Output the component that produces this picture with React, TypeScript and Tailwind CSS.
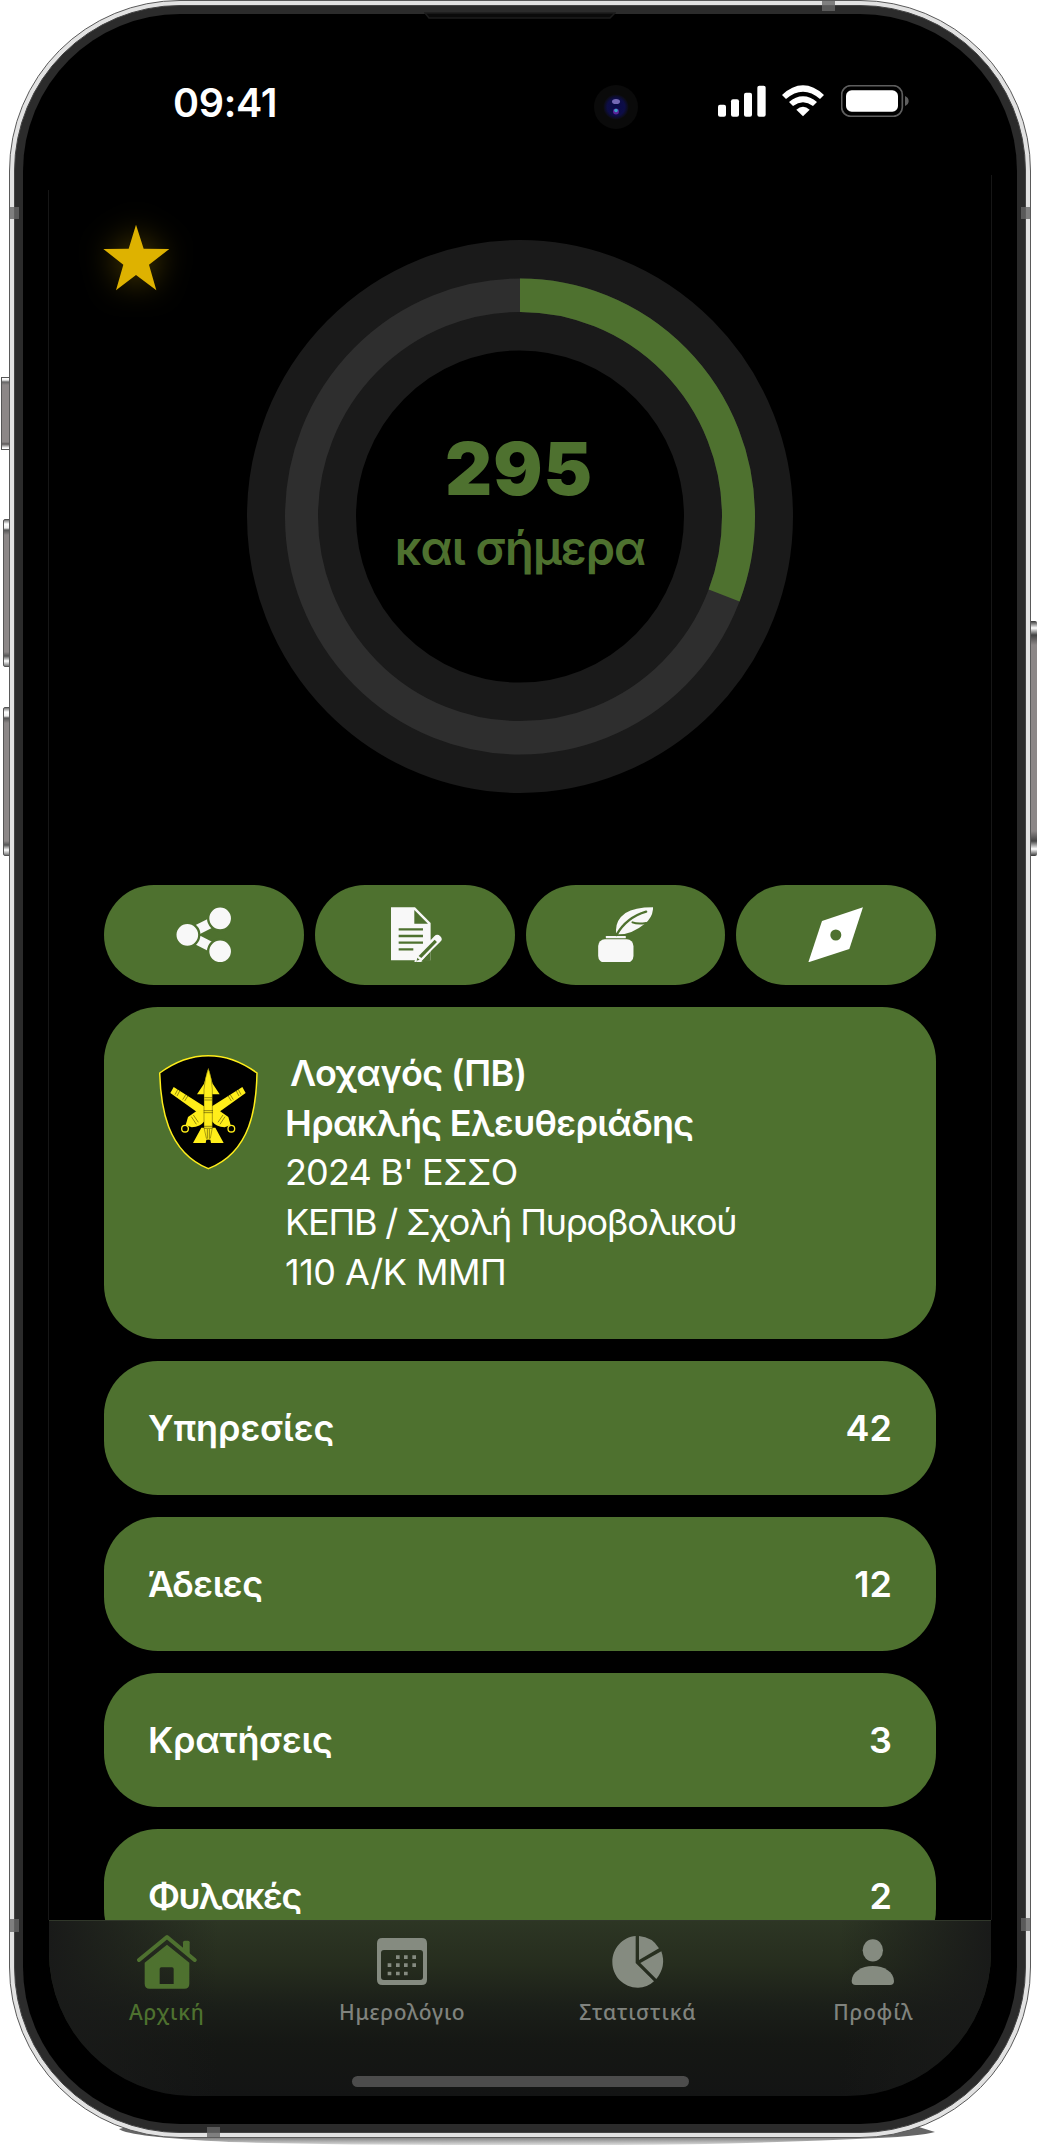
import React from "react";

const GREEN = "#4e712f";

function StatusBar() {
  return (
    <div className="flex h-[178px] shrink-0 items-start pt-[63px] pl-[124px]">
      <div className="mt-[2px] h-[48px] w-[421px] shrink-0 text-[39.500px] leading-[48px] font-[560] tracking-[-0.300px] text-white">
        09:41
      </div>
      <svg className="mt-[8px] mr-[80px]" width="44" height="44" viewBox="0 0 44 44">
        <defs>
          <radialGradient id="lens">
            <stop offset="0" stopColor="#0a0a4a" />
            <stop offset="0.7" stopColor="#0d0d45" />
            <stop offset="1" stopColor="#0c0c10" />
          </radialGradient>
        </defs>
        <circle cx="22" cy="22" r="22" fill="#0a0a0a" />
        <circle cx="22" cy="22" r="12.5" fill="url(#lens)" />
        <ellipse cx="22" cy="16.5" rx="4" ry="2.6" fill="#8f7fd0" opacity="0.8" />
        <circle cx="22" cy="26.500" r="3" fill="#5a2298" />
        <circle cx="22" cy="25.5" r="1.8" fill="#38a0c8" />
      </svg>
      <svg className="mt-[8px]" width="48" height="32" viewBox="597 256 144 96" fill="#fff">
        <rect x="597" y="315" width="24" height="36" rx="6" />
        <rect x="636" y="299" width="24" height="52" rx="6" />
        <rect x="675" y="279" width="24" height="72" rx="6" />
        <rect x="715" y="258" width="25" height="93" rx="6" />
      </svg>
      <svg className="mt-[8px] ml-[16px]" width="42" height="32" viewBox="789 256 126 96" fill="#fff">
        <path d="M789 286Q820 257 852 257T915 286L903 298Q878 276 852 276T801 298Z" />
        <path d="M810 307Q830 290 852 290T894 307L882 319Q867 308 852 308T822 319Z" />
        <path d="M832 330Q852 313 872 330L852 350Z" />
      </svg>
      <svg className="mt-[8px] ml-[17px]" width="68" height="32" viewBox="966 256 204 96">
        <rect x="968" y="258" width="182" height="92" rx="27" fill="none" stroke="#5e5e5e" strokeWidth="5" />
        <rect x="981" y="272" width="156" height="64" rx="17" fill="#fff" />
        <path d="M1158 289Q1169 294 1169 304T1158 319Z" fill="#5e5e5e" />
      </svg>
    </div>
  );
}

function Hero() {
  return (
    <div className="grid h-[692.5px] shrink-0 grid-cols-1 grid-rows-1">
      <svg
        className="col-start-1 row-start-1 mt-[32px] -ml-px overflow-visible drop-shadow-[0_0_16px_rgba(222,178,0,0.36)]"
        width="67"
        height="67"
        viewBox="310 672 201 201"
      >
        <path d="M409 674L432 746L509 747L448 794L470 871L409 825L349 871L371 794L311 747L387 746Z" fill="#deb200" />
      </svg>
      <div className="col-start-1 row-start-1 mt-[48px] grid h-[553px] w-[546px] justify-self-center">
        <svg className="col-start-1 row-start-1" width="546" height="553" viewBox="-273 -276.5 546 553">
          <g transform="scale(1 1.0128)">
            <circle r="218.5" fill="none" stroke="#1a1a1a" strokeWidth="109" />
            <circle r="218.5" fill="none" stroke="#2e2e2e" strokeWidth="33" />
            <circle
              r="218.5"
              fill="none"
              stroke={GREEN}
              strokeWidth="33"
              pathLength="360"
              strokeDasharray="110.9 360"
              transform="rotate(-90)"
            />
          </g>
        </svg>
        <div className="col-start-1 row-start-1 flex flex-col items-center pt-[187px] text-[#4e712f]">
          <div className="-ml-[2px] h-[84px] text-[73px] leading-[84px] font-black tracking-[1px]">295</div>
          <div className="mt-[9px] h-[56px] text-[47px] leading-[56px] font-[560] tracking-[-1px] whitespace-nowrap">
            και σήμερα
          </div>
        </div>
      </div>
    </div>
  );
}

function ShareIcon() {
  return (
    <svg width="55.3" height="55.7" viewBox="257 110 166 167">
      <path d="M291 193L389 144M291 193L389 243" stroke="#f8f8f8" strokeWidth="30" />
      <g fill="#f8f8f8" stroke={GREEN} strokeWidth="7">
        <circle cx="291" cy="193.5" r="36" />
        <circle cx="389.500" cy="144" r="36" />
        <circle cx="389.500" cy="243" r="36" />
      </g>
      <path d="M327 194h12" stroke={GREEN} strokeWidth="4" />
    </svg>
  );
}

function DocumentIcon() {
  return (
    <svg width="55.300" height="55.700" viewBox="892 110 166 167">
      <path d="M904 111H976L1023 158V270H904Z" fill="#f8f8f8" />
      <path d="M974 119V160H1015Z" fill={GREEN} />
      <path d="M927 177h73M927 197h73M927 217h73M927 237h44" stroke={GREEN} strokeWidth="7" />
      <path d="M974 262L979 250L1022 207V230L998 273L985 279Z" fill="#f8f8f8" />
      <path d="M996 272L1023 243V271Z" fill={GREEN} />
      <path d="M974 276L979 257L1034 198Q1043 189 1052 198T1052 214L996 270Z" fill="#f8f8f8" />
      <path d="M987 257L1035 208L1042 215L995 263Z" fill={GREEN} />
      <path d="M983 262L990 268L981 271Z" fill={GREEN} />
    </svg>
  );
}

function QuillIcon() {
  return (
    <svg width="55.300" height="55.700" viewBox="263.500 110 166 167" fill="#f8f8f8">
      <rect x="264" y="207" width="106" height="70" rx="20" />
      <rect x="287" y="197" width="60" height="7" rx="1.500" />
      <path d="M318 187Q314 151 346 128Q373 111 429 111Q428 142 404 160Q364 193 324 192Z" />
      <path d="M319 194C338 160 364 137 408 124" fill="none" stroke={GREEN} strokeWidth="7" strokeLinecap="round" />
      <path d="M367 156Q382 162 408 158" fill="none" stroke={GREEN} strokeWidth="6" strokeLinecap="round" />
    </svg>
  );
}

function CompassIcon() {
  return (
    <svg width="55.300" height="55.700" viewBox="897 110 166 167">
      <path d="M1062 111L1021 236L898 276L939 152Z" fill="#fff" />
      <circle cx="980.500" cy="194" r="16.500" fill={GREEN} />
    </svg>
  );
}

function Emblem() {
  const barrel = (
    <g>
      <path d="M99 140L190 198L222 224L202 246L176 220L89 158Z" fill="#ffee1a" />
      <path d="M112 146L103 163M118 150L109 167M136 162L126 178M142 166L132 182" stroke="#2a2600" strokeWidth="1.500" />
    </g>
  );
  const breech = (
    <g>
      <path d="M216 220L232 208L263 230L270 254L252 261Q226 259 213 242Z" fill="#ffee1a" />
      <path d="M247 224L232 246M253 229L238 252" stroke="#2a2600" strokeWidth="1.500" />
      <circle cx="272" cy="265" r="10" fill="none" stroke="#ffee1a" strokeWidth="4" />
    </g>
  );
  return (
    <svg width="100.700" height="116.300" viewBox="52 41 302 349">
      <path
        d="M57 98Q127 46 203 46T349 98C347 196 333 334 203 385C77 334 60 196 57 98Z"
        fill="#000"
        stroke="#ffee1a"
        strokeWidth="4.500"
      />
      {barrel}
      <g transform="translate(404 0) scale(-1 1)">{barrel}</g>
      {breech}
      <g transform="translate(405 0) scale(-1 1)">{breech}</g>
      <path d="M203 83L216 130L237 162H169L190 130Z" fill="#ffee1a" />
      <path d="M182 262L157 308H195L197 298H209L211 308H249L224 262Z" fill="#ffee1a" />
      <path d="M203 84Q214 112 215 148V262L209 294Q202 302 197 294L190 262V148Q192 112 203 84Z" fill="#ffee1a" stroke="#2a2600" strokeWidth="1.200" />
      <path d="M191 172H215M191 179H215M189 211H217M189 217H217M190 258H215M190 264H215M200 266V294M206 266V294" stroke="#2a2600" strokeWidth="1.500" />
    </svg>
  );
}

function ProfileCard() {
  return (
    <div className="mt-[22px] flex h-[332px] shrink-0 rounded-[54px] bg-[#4e712f] pt-[42.500px] pl-[54px] text-[36px] leading-[49.7px] text-white">
      <div className="mt-[5px] w-[128px] shrink-0">
        <Emblem />
      </div>
      <div className="-ml-px whitespace-nowrap">
        <div className="pl-[5px] font-[580] tracking-[-0.6px]">Λοχαγός (ΠΒ)</div>
        <div className="font-[580] tracking-[-0.7px]">Ηρακλής Ελευθεριάδης</div>
        <div className="font-[390] tracking-[-0.850px]">2024 Β' ΕΣΣΟ</div>
        <div className="font-[390] tracking-[-1.2px]">ΚΕΠΒ / Σχολή Πυροβολικού</div>
        <div className="font-[390] tracking-[-0.5px]">110 Α/Κ ΜΜΠ</div>
      </div>
    </div>
  );
}

const rows = [
  { label: "Υπηρεσίες", value: 42, tracking: "tracking-[-0.1px]" },
  { label: "Άδειες", value: 12, tracking: "tracking-[-0.5px]" },
  { label: "Κρατήσεις", value: 3, tracking: "tracking-[-0.3px]" },
  { label: "Φυλακές", value: 2, tracking: "tracking-[-1.400px]" },
];

const actions = [ShareIcon, DocumentIcon, QuillIcon, CompassIcon];

function HomeIcon() {
  return (
    <svg width="60" height="60" viewBox="409 159 180 180" fill={GREEN}>
      <path d="M415 240L499 171L582 240" fill="none" stroke={GREEN} strokeWidth="12" strokeLinecap="round" strokeLinejoin="round" />
      <path d="M547 205V187Q547 182 552 182H562Q567 182 567 187V226Z" />
      <path
        fillRule="evenodd"
        d="M499 194L566 248V311Q566 326 551 326H447Q432 326 432 311V248ZM482 262Q477 262 477 267V312H519V267Q519 262 514 262Z"
      />
    </svg>
  );
}

function CalendarIcon() {
  return (
    <svg width="60" height="60" viewBox="1116 159 180 180" fill="#858b80">
      <path
        fillRule="evenodd"
        d="M1147 174H1265Q1281 174 1281 190V299Q1281 315 1265 315H1147Q1131 315 1131 299V190Q1131 174 1147 174ZM1152 210Q1143 210 1143 219V291Q1143 300 1152 300H1260Q1269 300 1269 291V219Q1269 210 1260 210Z"
      />
      <path d="M1188 226h11v11h-11zM1212 226h11v11h-11zM1237 226h11v11h-11zM1163 250h11v11h-11zM1188 250h11v11h-11zM1212 250h11v11h-11zM1237 250h11v11h-11zM1163 275h11v11h-11zM1188 275h11v11h-11zM1212 275h11v11h-11z" />
    </svg>
  );
}

function PieIcon() {
  return (
    <svg width="60" height="60" viewBox="268 159 180 180" fill="#858b80">
      <path d="M351 168V249L406 304Q386 323 358 323C315 323 281 289 281 246C281 204 312 171 351 168Z" />
      <path d="M361 168Q401 171 421 205L361 240Z" />
      <path d="M428 214Q444 259 413 297L365 249Z" />
    </svg>
  );
}

function PersonIcon() {
  return (
    <svg width="60" height="60" viewBox="973 159 180 180" fill="#858b80">
      <ellipse cx="1062.500" cy="211" rx="30.500" ry="33.500" />
      <path d="M999 303C1000 276 1028 258 1062.500 258S1125 276 1126 303Q1126 315 1114 315H1011Q999 315 999 303Z" />
    </svg>
  );
}

const tabs = [
  { label: "Αρχική", Icon: HomeIcon, color: "text-[#4e712f]" },
  { label: "Ημερολόγιο", Icon: CalendarIcon, color: "text-[#80837e]" },
  { label: "Στατιστικά", Icon: PieIcon, color: "text-[#80837e]" },
  { label: "Προφίλ", Icon: PersonIcon, color: "text-[#80837e]" },
];

function TabBar() {
  return (
    <div className="flex h-[176px] shrink-0 flex-col overflow-hidden rounded-b-[144px] border-t border-[#30372a] bg-[linear-gradient(90deg,#191a19_0%,#191a1900_18%,#191a1900_84%,#191a19_100%),linear-gradient(180deg,#2d3624_0%,#262d1e_25%,#1b1f19_48%,#151714_70%,#131414_100%)]">
      <div className="grid grid-cols-4 pt-[12px]">
        {tabs.map(({ label, Icon, color }) => (
          <div key={label} className="flex flex-col items-center">
            <Icon />
            <div
              className={`mt-[4px] h-[30px] font-['Noto_Sans','Open_Sans',sans-serif] text-[21px] leading-[30px] font-medium tracking-[0.8px] ${color}`}
            >
              {label}
            </div>
          </div>
        ))}
      </div>
      <div className="mt-auto mb-[9px] h-[11px] w-[337px] self-center rounded-full bg-[#4c4c4c]" />
    </div>
  );
}

function SideButtons() {
  return (
    <>
      <div className="absolute top-[377px] left-[1px] h-[73px] w-[10px] border border-[#555] bg-[linear-gradient(180deg,#fff_0,#eee_2px,#666_4px,#8c8787_7px,#8c8787_64px,#5c5858_66px,#fff_70px)]" />
      <div className="absolute top-[519px] left-[3px] h-[148px] w-[8px] rounded-l-[2px] border border-[#555] bg-[linear-gradient(180deg,#777_0,#fff_4px,#eee_8px,#555_10px,#8c8787_15px,#8c8787_132px,#555_136px,#fff_141px,#777_100%)]" />
      <div className="absolute top-[707px] left-[3px] h-[149px] w-[8px] rounded-l-[2px] border border-[#555] bg-[linear-gradient(180deg,#777_0,#fff_4px,#eee_8px,#555_10px,#8c8787_15px,#8c8787_133px,#555_137px,#fff_142px,#777_100%)]" />
      <div className="absolute top-[621px] right-[1px] h-[235px] w-[8px] rounded-r-[2px] bg-[linear-gradient(180deg,#333_0,#888_3px,#fff_7px,#444_14px,#8c8787_24px,#8c8787_210px,#444_220px,#fff_228px,#333_100%)]" />
      <svg className="absolute top-[2120px] left-[119px]" width="816" height="26" viewBox="0 0 816 26">
        <defs>
          <linearGradient id="ground" x1="0" y1="0" x2="0" y2="1">
            <stop offset="0.55" stopColor="#666" />
            <stop offset="1" stopColor="#dcdcdc" />
          </linearGradient>
        </defs>
        <path d="M0 9Q10 17 110 22Q220 25 330 25H500Q640 24 760 18Q800 16 816 12L790 4H20Z" fill="url(#ground)" />
      </svg>
    </>
  );
}

function AntennaBands() {
  return (
    <>
      <div className="absolute top-[207px] left-[10px] h-[12px] w-[9px] bg-[#666]/80" />
      <div className="absolute top-[207px] right-[8px] h-[12px] w-[9px] bg-[#666]/80" />
      <div className="absolute top-[1919px] left-[10px] h-[13px] w-[9px] bg-[#666]/80" />
      <div className="absolute top-[1918px] right-[8px] h-[13px] w-[9px] bg-[#666]/80" />
      <div className="absolute top-[1px] left-[822px] h-[10px] w-[13px] bg-[#666]/80" />
      <div className="absolute top-[2127px] left-[207px] h-[10px] w-[13px] bg-[#666]/80" />
      <svg className="absolute top-[12px] left-[424px]" width="192" height="7" viewBox="0 0 192 7">
        <path d="M1 1L5 6H186L191 1Z" fill="#0a0a0a" stroke="#1c1c1c" strokeWidth="1.500" />
      </svg>
      <div className="absolute top-[190px] left-[48px] h-[1730px] w-px bg-[#161616]" />
      <div className="absolute top-[175px] right-[46px] h-[1745px] w-px bg-[#161616]" />
    </>
  );
}

export default function App() {
  return (
    <div className="relative h-[2147px] w-[1038px] overflow-hidden bg-white font-['Inter',sans-serif]">
      <SideButtons />
      <div className="relative ml-[9px] h-[2138px] w-[1022px] rounded-[171px] border border-[#5a5a5a] bg-[#e2e2e2] p-[4px]">
        <div className="h-full rounded-[166px] border border-[#444] bg-[#2b2b2b] p-[8px]">
          <div className="flex h-full flex-col overflow-hidden rounded-[157px] bg-black px-[26px] pb-[28px]">
            <StatusBar />
            <div className="flex min-h-0 flex-1 flex-col overflow-hidden px-[55px]">
              <Hero />
              <div className="grid h-[100px] shrink-0 grid-cols-4 gap-[11px]">
                {actions.map((Icon, i) => (
                  <div key={i} className="flex items-center justify-center rounded-[50px] bg-[#4e712f]">
                    <Icon />
                  </div>
                ))}
              </div>
              <ProfileCard />
              {rows.map((r) => (
                <div
                  key={r.label}
                  className="mt-[22.500px] flex h-[133.500px] shrink-0 items-center justify-between rounded-[54px] bg-[#4e712f] px-[44px] text-[36px] font-[580] text-white"
                >
                  <span className={r.tracking}>{r.label}</span>
                  <span>{r.value}</span>
                </div>
              ))}
            </div>
            <TabBar />
          </div>
        </div>
      </div>
      <AntennaBands />
    </div>
  );
}
